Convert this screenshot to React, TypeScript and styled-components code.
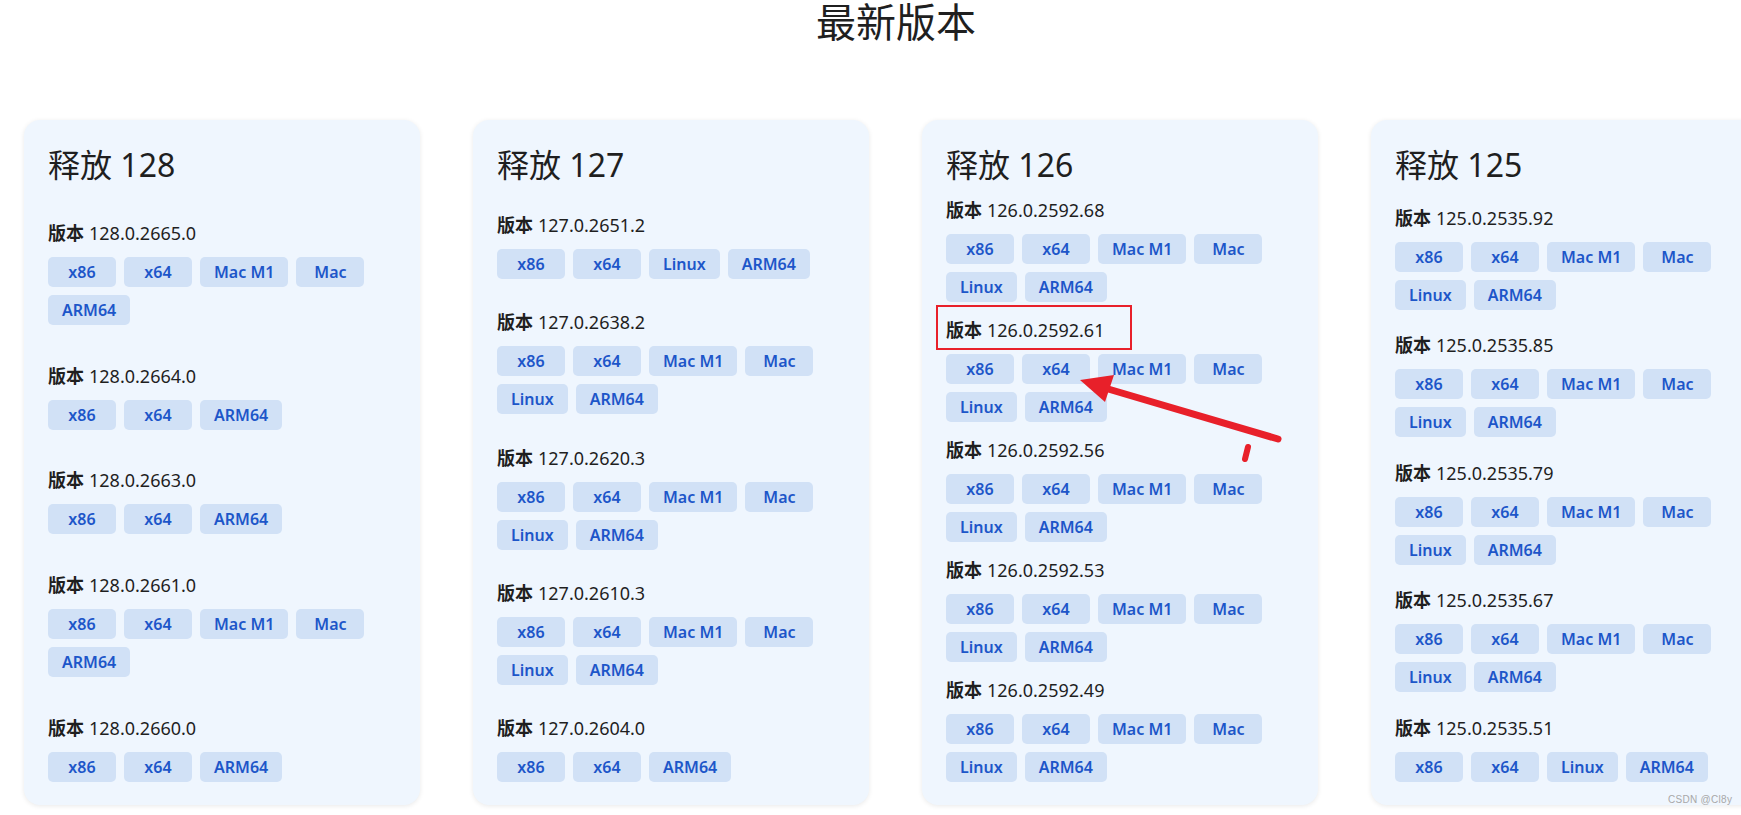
import styled, { createGlobalStyle } from 'styled-components';

const GlobalStyle = createGlobalStyle`
	html, body {
		margin: 0;
		padding: 0;
		overflow: hidden;
		background: #ffffff;
	}
	body {
		font-family: 'Noto Sans', 'Noto Sans CJK SC', sans-serif;
		color: #1f1f1f;
	}
`;

type Release = {
	name: string;
	versions: { id: string; builds: string[] }[];
};

const ALL = ['x86', 'x64', 'Mac M1', 'Mac', 'Linux', 'ARM64'];
const MAC = ['x86', 'x64', 'Mac M1', 'Mac', 'ARM64'];
const MIN = ['x86', 'x64', 'ARM64'];
const LNX = ['x86', 'x64', 'Linux', 'ARM64'];

const releases: Release[] = [
	{
		name: '128',
		versions: [
			{ id: '128.0.2665.0', builds: MAC },
			{ id: '128.0.2664.0', builds: MIN },
			{ id: '128.0.2663.0', builds: MIN },
			{ id: '128.0.2661.0', builds: MAC },
			{ id: '128.0.2660.0', builds: MIN },
		],
	},
	{
		name: '127',
		versions: [
			{ id: '127.0.2651.2', builds: LNX },
			{ id: '127.0.2638.2', builds: ALL },
			{ id: '127.0.2620.3', builds: ALL },
			{ id: '127.0.2610.3', builds: ALL },
			{ id: '127.0.2604.0', builds: MIN },
		],
	},
	{
		name: '126',
		versions: [
			{ id: '126.0.2592.68', builds: ALL },
			{ id: '126.0.2592.61', builds: ALL },
			{ id: '126.0.2592.56', builds: ALL },
			{ id: '126.0.2592.53', builds: ALL },
			{ id: '126.0.2592.49', builds: ALL },
		],
	},
	{
		name: '125',
		versions: [
			{ id: '125.0.2535.92', builds: ALL },
			{ id: '125.0.2535.85', builds: ALL },
			{ id: '125.0.2535.79', builds: ALL },
			{ id: '125.0.2535.67', builds: ALL },
			{ id: '125.0.2535.51', builds: LNX },
		],
	},
];

const Page = styled.main`
	position: relative;
	width: 1792px;
	height: 815px;
	box-sizing: border-box;
	padding: 0 24px;
`;

const Title = styled.h1`
	margin: 0 0 78px;
	padding-top: 2px;
	font-size: 40px;
	line-height: 40px;
	font-weight: 400;
	text-align: center;
	color: #1f1f1f;
`;

const Grid = styled.section`
	display: grid;
	grid-template-columns: repeat(4, 396px);
	column-gap: 53px;
	align-items: stretch;
`;

const Card = styled.article`
	display: flex;
	flex-direction: column;
	justify-content: space-between;
	gap: 16px;
	box-sizing: border-box;
	padding: 28px 24px 23px;
	background: #eff6fe;
	border-radius: 16px;
	box-shadow: 0 1px 5px rgba(0, 0, 0, 0.09);
`;

const CardTitle = styled.h2`
	margin: 0;
	font-size: 32px;
	line-height: 34px;
	font-weight: 400;
	color: #1f1f1f;
`;

const Version = styled.div`
	display: flex;
	flex-direction: column;
`;

const Label = styled.div`
	margin-bottom: 12px;
	font-size: 18px;
	line-height: 24px;
	color: #1f1f1f;

	b {
		font-weight: 700;
		margin-right: 5px;
	}
`;

const Chips = styled.div`
	display: flex;
	flex-wrap: wrap;
	gap: 8px;
`;

const Chip = styled.a`
	display: inline-flex;
	align-items: center;
	justify-content: center;
	box-sizing: border-box;
	height: 30px;
	min-width: 68px;
	padding: 0 14px;
	border-radius: 5px;
	background: #d1e1f6;
	color: #1d56c9;
	font-size: 16px;
	font-weight: 600;
	text-decoration: none;
`;

const Marks = styled.svg`
	position: absolute;
	left: 0;
	top: 0;
	pointer-events: none;
`;

const Watermark = styled.span`
	position: absolute;
	left: 1668px;
	top: 794px;
	font-family: 'Liberation Sans', Arial, sans-serif;
	font-size: 10px;
	color: #a8a8a8;
	letter-spacing: 0.3px;
`;

export default function App() {
	return (
		<>
			<GlobalStyle />
			<Page>
				<Title>最新版本</Title>
				<Grid>
					{releases.map((r) => (
						<Card key={r.name}>
							<CardTitle>释放 {r.name}</CardTitle>
							{r.versions.map((v) => (
								<Version key={v.id}>
									<Label>
										<b>版本</b>
										{v.id}
									</Label>
									<Chips>
										{v.builds.map((b) => (
											<Chip key={b}>{b}</Chip>
										))}
									</Chips>
								</Version>
							))}
						</Card>
					))}
				</Grid>
				<Marks width="1792" height="815" viewBox="0 0 1792 815">
					<rect x="937" y="306" width="194" height="43" fill="none" stroke="#e8202a" strokeWidth="2" />
					<line x1="1098" y1="386" x2="1278" y2="439" stroke="#e8202a" strokeWidth="7" strokeLinecap="round" />
					<polygon points="1080,380 1114,375 1105,402" fill="#e8202a" />
					<line x1="1248" y1="447" x2="1245" y2="459" stroke="#e8202a" strokeWidth="6" strokeLinecap="round" />
				</Marks>
				<Watermark>CSDN @Cl8y</Watermark>
			</Page>
		</>
	);
}
